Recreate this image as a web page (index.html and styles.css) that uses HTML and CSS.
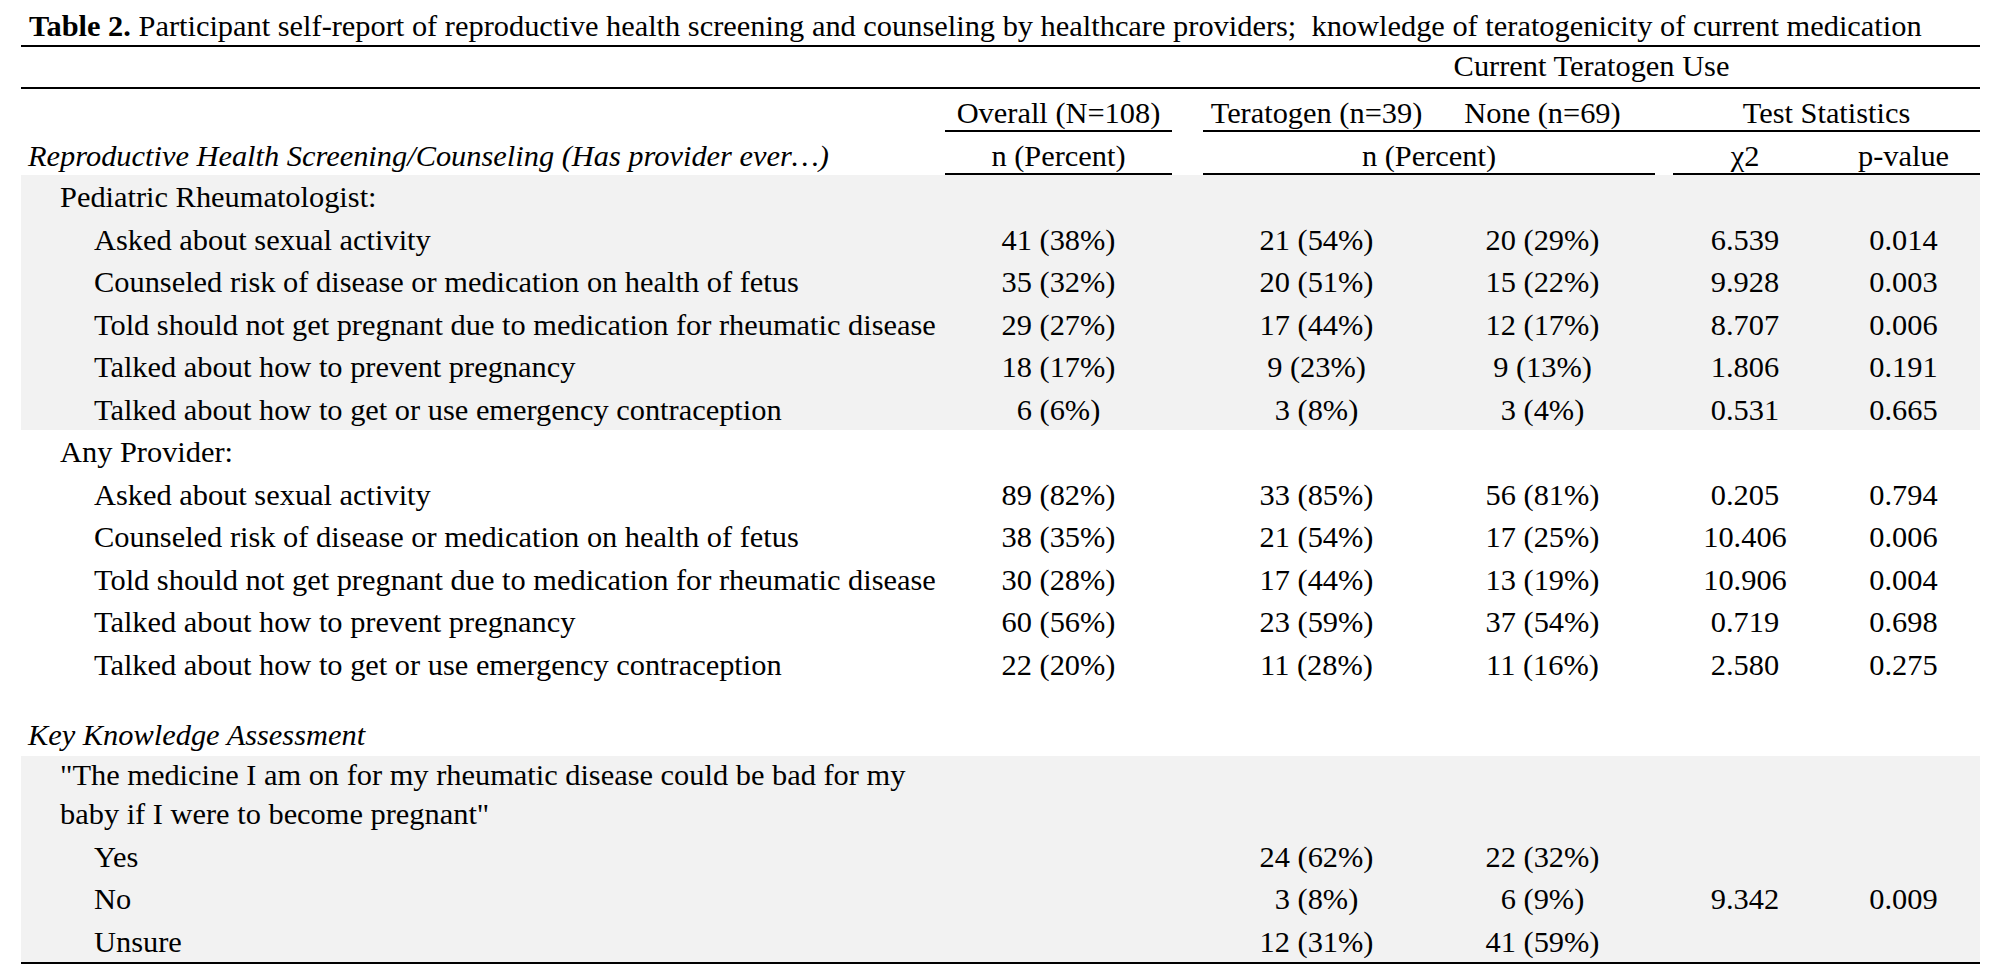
FILE: index.html
```html
<!DOCTYPE html>
<html lang="en">
<head>
<meta charset="utf-8">
<title>Table 2</title>
<link rel="stylesheet" href="styles.css">
</head>
<body>
<table class="report">
  <caption class="title"><b>Table 2.</b> Participant self-report of reproductive health screening and counseling by healthcare providers;&nbsp; knowledge of teratogenicity of current medication</caption>
  <colgroup>
    <col class="c-label"><col class="c-overall"><col class="c-gap1"><col class="c-tera"><col class="c-none"><col class="c-gap2"><col class="c-chi"><col class="c-p">
  </colgroup>
  <thead>
    <tr class="hr-b">
      <th colspan="3" class="rule"></th>
      <th colspan="5" class="rule">Current Teratogen Use</th>
    </tr>
    <tr class="hr-c">
      <th></th>
      <th class="rule">Overall (N=108)</th>
      <th></th>
      <th class="rule">Teratogen (n=39)</th>
      <th class="rule">None (n=69)</th>
      <th class="rule"></th>
      <th colspan="2" class="rule">Test Statistics</th>
    </tr>
    <tr class="hr-d">
      <th class="label-head">Reproductive Health Screening/Counseling (Has provider ever…)</th>
      <th class="rule">n (Percent)</th>
      <th></th>
      <th colspan="2" class="rule">n (Percent)</th>
      <th></th>
      <th class="rule">χ2</th>
      <th class="rule pcol">p-value</th>
    </tr>
  </thead>
  <tbody class="shade">
    <tr><td class="lbl l1">Pediatric Rheumatologist:</td><td></td><td></td><td></td><td></td><td></td><td></td><td class="pcol"></td></tr>
    <tr><td class="lbl l2">Asked about sexual activity</td><td>41 (38%)</td><td></td><td>21 (54%)</td><td>20 (29%)</td><td></td><td>6.539</td><td class="pcol">0.014</td></tr>
    <tr><td class="lbl l2">Counseled risk of disease or medication on health of fetus</td><td>35 (32%)</td><td></td><td>20 (51%)</td><td>15 (22%)</td><td></td><td>9.928</td><td class="pcol">0.003</td></tr>
    <tr><td class="lbl l2">Told should not get pregnant due to medication for rheumatic disease</td><td>29 (27%)</td><td></td><td>17 (44%)</td><td>12 (17%)</td><td></td><td>8.707</td><td class="pcol">0.006</td></tr>
    <tr><td class="lbl l2">Talked about how to prevent pregnancy</td><td>18 (17%)</td><td></td><td>9 (23%)</td><td>9 (13%)</td><td></td><td>1.806</td><td class="pcol">0.191</td></tr>
    <tr><td class="lbl l2">Talked about how to get or use emergency contraception</td><td>6 (6%)</td><td></td><td>3 (8%)</td><td>3 (4%)</td><td></td><td>0.531</td><td class="pcol">0.665</td></tr>
  </tbody>
  <tbody>
    <tr><td class="lbl l1">Any Provider:</td><td></td><td></td><td></td><td></td><td></td><td></td><td class="pcol"></td></tr>
    <tr><td class="lbl l2">Asked about sexual activity</td><td>89 (82%)</td><td></td><td>33 (85%)</td><td>56 (81%)</td><td></td><td>0.205</td><td class="pcol">0.794</td></tr>
    <tr><td class="lbl l2">Counseled risk of disease or medication on health of fetus</td><td>38 (35%)</td><td></td><td>21 (54%)</td><td>17 (25%)</td><td></td><td>10.406</td><td class="pcol">0.006</td></tr>
    <tr><td class="lbl l2">Told should not get pregnant due to medication for rheumatic disease</td><td>30 (28%)</td><td></td><td>17 (44%)</td><td>13 (19%)</td><td></td><td>10.906</td><td class="pcol">0.004</td></tr>
    <tr><td class="lbl l2">Talked about how to prevent pregnancy</td><td>60 (56%)</td><td></td><td>23 (59%)</td><td>37 (54%)</td><td></td><td>0.719</td><td class="pcol">0.698</td></tr>
    <tr><td class="lbl l2">Talked about how to get or use emergency contraception</td><td>22 (20%)</td><td></td><td>11 (28%)</td><td>11 (16%)</td><td></td><td>2.580</td><td class="pcol">0.275</td></tr>
  </tbody>
  <tbody>
    <tr class="spacer"><td colspan="8"></td></tr>
    <tr><td class="lbl l0 section">Key Knowledge Assessment</td><td></td><td></td><td></td><td></td><td></td><td></td><td class="pcol"></td></tr>
  </tbody>
  <tbody class="shade closing">
    <tr class="quote"><td class="lbl l1">"The medicine I am on for my rheumatic disease could be bad for my<br>baby if I were to become pregnant"</td><td></td><td></td><td></td><td></td><td></td><td></td><td class="pcol"></td></tr>
    <tr><td class="lbl l2">Yes</td><td></td><td></td><td>24 (62%)</td><td>22 (32%)</td><td></td><td></td><td class="pcol"></td></tr>
    <tr><td class="lbl l2">No</td><td></td><td></td><td>3 (8%)</td><td>6 (9%)</td><td></td><td>9.342</td><td class="pcol">0.009</td></tr>
    <tr><td class="lbl l2">Unsure</td><td></td><td></td><td>12 (31%)</td><td>41 (59%)</td><td></td><td></td><td class="pcol"></td></tr>
  </tbody>
</table>
</body>
</html>
```

FILE: styles.css
```css
html, body {
  margin: 0;
  padding: 0;
  background: #ffffff;
}

body {
  font-family: "Liberation Serif", "Times New Roman", serif;
  font-size: 30.4px;
  color: #000000;
}

.report {
  margin: 0 0 0 21px;
  width: 1959px;
  table-layout: fixed;
  border-collapse: separate;
  border-spacing: 0;
}

.c-label { width: 924px; }
.c-overall { width: 227px; }
.c-gap1 { width: 31px; }
.c-tera { width: 227px; }
.c-none { width: 225px; }
.c-gap2 { width: 18px; }
.c-chi { width: 144px; }
.c-p { width: 163px; }

.title {
  caption-side: top;
  text-align: left;
  white-space: nowrap;
  padding: 9px 0 2px 8px;
  line-height: 34px;
  border-bottom: 2px solid #000000;
}

.title b {
  font-weight: 700;
}

th {
  font-weight: 400;
  text-align: center;
  line-height: 34px;
  padding: 0;
  border-bottom: 2px solid transparent;
  white-space: nowrap;
}

th.rule {
  border-bottom-color: #000000;
}

.hr-b th { padding-top: 2px; padding-bottom: 4px; }
.hr-c th { padding-top: 7px; padding-bottom: 0; }
.hr-d th { padding-top: 7px; padding-bottom: 0; }

.label-head {
  font-style: italic;
  text-align: left;
  padding-left: 7px;
}

td {
  padding: 3px 0 0 0;
  line-height: 39.5px;
  text-align: center;
  white-space: nowrap;
  vertical-align: top;
}

.pcol {
  padding-left: 10px;
}

td.lbl { text-align: left; }
td.l0 { padding-left: 7px; }
td.l1 { padding-left: 39px; }
td.l2 { padding-left: 73px; }

td.section {
  font-style: italic;
}

.shade td {
  background: #f2f2f2;
}

.spacer td {
  height: 28px;
  padding: 0;
  line-height: 0;
}

.quote td {
  padding-top: 0;
}

.closing tr:last-child td {
  border-bottom: 2px solid #000000;
}
```
